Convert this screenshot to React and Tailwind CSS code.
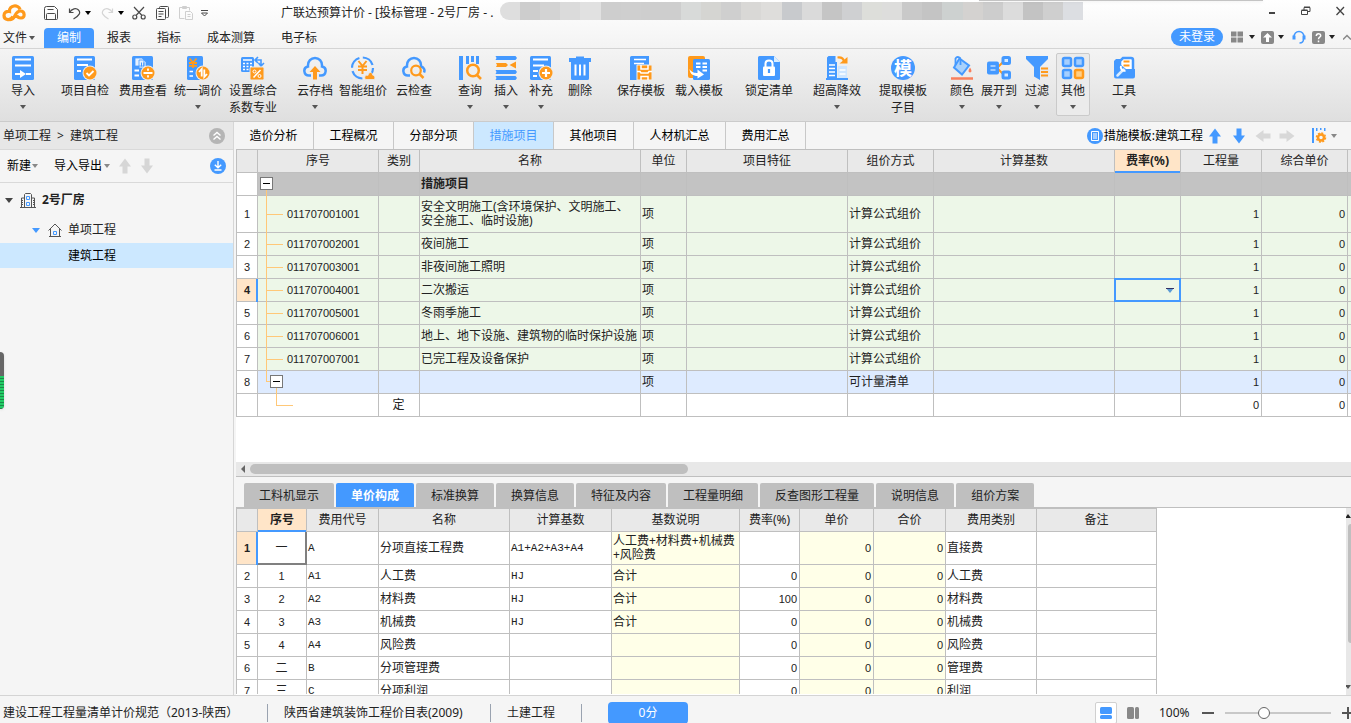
import { useState } from "react";
import clsx from "clsx";

const BLUE = "#4499ff";
const ORANGE = "#ff9a1c";

const MOSAIC = [
  "bg-[#dedede]", "bg-[#cdcdcd]", "bg-[#d3d3d3]", "bg-[#dbdbdb]", "bg-[#e1e1e1]", "bg-[#cecece]",
  "bg-[#cfcfcf]", "bg-[#cecece]", "bg-[#cecece]", "bg-[#d8dad9]", "bg-[#d5d5d2]", "bg-[#cfcfcf]",
  "bg-[#d9d8d6]", "bg-[#dedddb]", "bg-[#c8cacd]", "bg-[#dadada]", "bg-[#c5c5c5]", "bg-[#cfd0d2]",
  "bg-[#dddeda]", "bg-[#dddddc]", "bg-[#c9c9c9]", "bg-[#c4c4c4]", "bg-[#cdd1d0]", "bg-[#d4d2d0]",
  "bg-[#cdcdcd]", "bg-[#dcdcdc]", "bg-[#c3c3c3]", "bg-[#cfcfcf]", "bg-[#dcdee2]",
];

const MENUS = ["编制", "报表", "指标", "成本测算", "电子标"];

const RIBBON = [
  { label: ["导入"], icon: "import", caret: true, box: "w-[46px]" },
  { label: ["项目自检"], icon: "check", box: "ml-2.5 w-[58px]" },
  { label: ["费用查看"], icon: "fee", box: "w-[58px]" },
  { label: ["统一调价"], icon: "price", caret: true, box: "w-[52px]" },
  { label: ["设置综合", "系数专业"], icon: "ratio", box: "w-[58px]" },
  { label: ["云存档"], icon: "cloudUp", caret: true, box: "ml-2.5 w-[46px]" },
  { label: ["智能组价"], icon: "smart", box: "w-[50px]" },
  { label: ["云检查"], icon: "cloudSearch", box: "w-[52px]" },
  { label: ["查询"], icon: "query", caret: true, box: "ml-3 w-9" },
  { label: ["插入"], icon: "insert", caret: true, box: "w-9" },
  { label: ["补充"], icon: "add", caret: true, box: "w-[34px]" },
  { label: ["删除"], icon: "trash", box: "w-11" },
  { label: ["保存模板"], icon: "saveTpl", box: "ml-2.5 w-[58px]" },
  { label: ["载入模板"], icon: "loadTpl", box: "w-[58px]" },
  { label: ["锁定清单"], icon: "lock", box: "ml-3 w-[58px]" },
  { label: ["超高降效"], icon: "tower", caret: true, box: "ml-2.5 w-[58px]" },
  { label: ["提取模板", "子目"], icon: "extract", box: "ml-2 w-[58px]" },
  { label: ["颜色"], icon: "color", caret: true, box: "ml-3 w-9" },
  { label: ["展开到"], icon: "expand", caret: true, box: "w-[38px]" },
  { label: ["过滤"], icon: "filter", caret: true, box: "w-[38px]" },
  { label: ["其他"], icon: "other", caret: true, active: true, box: "w-[34px]" },
  { label: ["工具"], icon: "tools", caret: true, box: "ml-4 w-9" },
];

const PAGE_TABS = ["造价分析", "工程概况", "分部分项", "措施项目", "其他项目", "人材机汇总", "费用汇总"];

const MEASURES = [
  { code: "011707001001", name: ["安全文明施工(含环境保护、文明施工、", "安全施工、临时设施)"] },
  { code: "011707002001", name: ["夜间施工"] },
  { code: "011707003001", name: ["非夜间施工照明"] },
  { code: "011707004001", name: ["二次搬运"], current: true },
  { code: "011707005001", name: ["冬雨季施工"] },
  { code: "011707006001", name: ["地上、地下设施、建筑物的临时保护设施"] },
  { code: "011707007001", name: ["已完工程及设备保护"] },
];

const DETAIL_TABS = ["工料机显示", "单价构成", "标准换算", "换算信息", "特征及内容", "工程量明细", "反查图形工程量", "说明信息", "组价方案"];

const FEES = [
  { no: "一", code: "A", name: "分项直接工程费", base: "A1+A2+A3+A4", note: ["人工费+材料费+机械费", "+风险费"], rate: "", kind: "直接费" },
  { no: "1", code: "A1", name: "人工费", base: "HJ", note: ["合计"], rate: "0", kind: "人工费" },
  { no: "2", code: "A2", name: "材料费", base: "HJ", note: ["合计"], rate: "100", kind: "材料费" },
  { no: "3", code: "A3", name: "机械费", base: "HJ", note: ["合计"], rate: "0", kind: "机械费" },
  { no: "4", code: "A4", name: "风险费", base: "", note: [], rate: "0", kind: "风险费" },
  { no: "二", code: "B", name: "分项管理费", base: "", note: [], rate: "0", kind: "管理费" },
  { no: "三", code: "C", name: "分项利润", base: "", note: [], rate: "0", kind: "利润" },
];

export default function App() {
  return (
    <div className="relative flex h-screen flex-col overflow-hidden bg-[#f5f5f5] font-['Noto_Sans','Noto_Sans_CJK_SC',sans-serif] text-xs text-[#222]">
      <header className="bg-linear-to-b from-white to-[#f3f3f3]">
        <TitleBar />
        <MenuBar />
      </header>
      <Ribbon />
      <main className="flex min-h-0 flex-1">
        <ProjectPanel />
        <section className="flex min-w-0 flex-1 flex-col">
          <PageTabs />
          <MeasureGrid />
          <DetailPane />
        </section>
      </main>
      <StatusBar />
      {/* side meter docked on the window edge */}
      <div className="absolute left-0 top-[352px] flex h-[57px] w-1 flex-col overflow-hidden rounded-r bg-[#666] shadow">
        <div className="mt-6 flex-1 bg-[repeating-linear-gradient(#22cc66_0_2px,#1a8a48_2px_3px)]" />
      </div>
      <div className="absolute right-[88px] top-0 h-px w-[284px] bg-[#c4c4c4] shadow" />
    </div>
  );
}

function Caret({ className = "text-[#555]" }) {
  return (
    <svg viewBox="0 0 6 4" className={clsx("h-1 w-1.5 shrink-0", className)} aria-hidden="true">
      <path d="M0 0h6L3 4z" fill="currentColor" />
    </svg>
  );
}

function TitleBar() {
  return (
    <div className="flex h-[26px] items-center">
      <div className="flex w-[281px] shrink-0 items-center text-[#4a4a4a]">
        <svg viewBox="0 0 24 18" className="ml-0.5 h-[18px] w-6" fill="none" aria-label="广联达">
          <path d="M11 12.500C9 17 2 16.500 2 11.500 2 8.500 4.500 7 7.500 7.500 7 1 16.500 0 18 5.500" stroke={ORANGE} strokeWidth="3.200" />
          <path d="M7.500 15.500c3.500.500 4.500-2 5.500-4s2.500-4.500 5.500-4.500c4.500 0 5 7 .500 7-2.500 0-4-1-3.500-3" stroke={ORANGE} strokeWidth="3.200" />
        </svg>
        <button aria-label="保存" className="ml-[18px]">
          <svg viewBox="0 0 14 14" className="size-3.5" fill="none" stroke="currentColor">
            <path d="M2.500.5h8l3 3v9a1 1 0 0 1-1 1h-11a1 1 0 0 1-1-1v-10a2 2 0 0 1 2-2zM3.500 3.500h6M2.500 13V8.500a1 1 0 0 1 1-1h7a1 1 0 0 1 1 1V13" />
          </svg>
        </button>
        <button aria-label="撤销" className="ml-2.5">
          <svg viewBox="0 0 13 13" className="size-[13px]" fill="none" stroke="currentColor" strokeWidth="1.200">
            <path d="M1.500 1.500v4h4M1.500 5.500C4 1.500 8 .500 10.500 3s1 5.500-5 9" />
          </svg>
        </button>
        <button aria-label="撤销列表" className="ml-1"><Caret className="text-black" /></button>
        <button aria-label="恢复" className="ml-2.5 text-[#d5d5d5]">
          <svg viewBox="0 0 13 13" className="size-[13px]" fill="none" stroke="currentColor" strokeWidth="1.200">
            <path d="M11.500 1.500v4h-4M11.500 5.500C9 1.500 5 .500 2.500 3s-1 5.500 5 9" />
          </svg>
        </button>
        <button aria-label="恢复列表" className="ml-1"><Caret className="text-black" /></button>
        <button aria-label="剪切" className="ml-2">
          <svg viewBox="0 0 14 14" className="size-3.5" fill="none" stroke="currentColor" strokeWidth="1.200">
            <path d="M2 1l8 8.500M12 1L4 9.500" />
            <circle cx="2.800" cy="11" r="2" /><circle cx="11.200" cy="11" r="2" />
          </svg>
        </button>
        <button aria-label="复制" className="ml-2.5">
          <svg viewBox="0 0 13 14" className="h-3.5 w-[13px]" fill="none" stroke="currentColor">
            <path d="M3.500 2.500v-1a1 1 0 0 1 1-1h7a1 1 0 0 1 1 1v9a1 1 0 0 1-1 1h-1" />
            <rect x=".5" y="2.500" width="9" height="11" rx="1" />
            <path d="M2.500 5.500h5M2.500 8h5M2.500 10.500h3" />
          </svg>
        </button>
        <button aria-label="粘贴" className="ml-2.5 text-[#cfcfcf]">
          <svg viewBox="0 0 14 14" className="size-3.5" fill="none" stroke="currentColor">
            <path d="M5.500 12.500h-5v-11h10v3M3.500.500h4v2h-4zM6.500 5.500h5l2 2v6h-7zM8.500 8.500h3M8.500 10.500h3" />
          </svg>
        </button>
        <button aria-label="自定义" className="ml-2">
          <svg viewBox="0 0 7 7" className="size-[7px]" fill="none" stroke="currentColor">
            <path d="M0 .500h7M.500 3h6L3.500 6z" />
          </svg>
        </button>
      </div>
      <h1 className="w-[219px] shrink-0 whitespace-nowrap">广联达预算计价 - [投标管理 - 2号厂房 - .</h1>
      <div className="mb-1 flex h-[18px] w-[583px] overflow-hidden rounded-l-full rounded-r-lg">
        {MOSAIC.map((tone, i) => <div key={i} className={clsx("flex-1", tone)} />)}
      </div>
      <div className="mb-1 ml-auto flex shrink-0 items-center gap-6 pr-1.5 text-[#444]">
        <button aria-label="最小化"><svg viewBox="0 0 10 10" className="size-2.5"><path d="M2 6h6v2H2z" fill="currentColor" /></svg></button>
        <button aria-label="还原">
          <svg viewBox="0 0 10 10" className="size-2.5" fill="none" stroke="currentColor"><path d="M.5 4.500h6v4h-6zM.5 4h6M3 4V1.500h6v4H7M3 1h6" /></svg>
        </button>
        <button aria-label="关闭">
          <svg viewBox="0 0 10 10" className="size-2.5" stroke="currentColor" strokeWidth="1.300"><path d="M1.500 1l7.500 8M9 1L1.500 9" /></svg>
        </button>
      </div>
    </div>
  );
}

function MenuBar() {
  const [active, setActive] = useState("编制");
  return (
    <nav className="flex h-[23px] items-end border-b border-[#d4d4d4]">
      <button className="flex h-5 w-11 items-center gap-0.5 pl-[3px]">文件<Caret /></button>
      {MENUS.map((menu) => (
        <button
          key={menu}
          onClick={() => setActive(menu)}
          className={clsx("h-5 rounded-t px-[13px]", menu === active && "bg-[#4499ff] text-white")}
        >
          {menu}
        </button>
      ))}
      <div className="mb-px ml-auto flex h-5 items-center gap-1.5 text-[#888]">
        <button className="h-[18px] w-[52px] rounded-full bg-[#4499ff] leading-[18px] text-white">未登录</button>
        <button aria-label="布局" className="ml-0.5 flex items-center gap-1.5">
          <svg viewBox="0 0 12 12" className="size-3" fill="currentColor"><path d="M0 .5h5.500v5H0zM6.500.5H12v5H6.500zM0 6.500h5.500v5H0zM6.500 6.500H12v5H6.500z" /></svg>
          <Caret className="text-[#222]" />
        </button>
        <button aria-label="升级" className="flex items-center gap-1">
          <svg viewBox="0 0 13 13" className="size-[13px]"><rect width="13" height="13" rx="2" fill="currentColor" /><path d="M6.500 2L11 6.500H8V11H5V6.500H2z" fill="#fff" /></svg>
          <Caret className="text-[#222]" />
        </button>
        <button aria-label="客服" className="ml-0.5">
          <svg viewBox="0 0 14 14" className="size-3.5" fill="none" stroke={BLUE}>
            <path d="M2 7.500C1.500-.500 12.500-.500 12 7.500M11.500 9c0 2.500-1.500 4-4 4" strokeWidth="1.500" />
            <path d="M2 5.500v4M12 5.500v4" strokeWidth="3" />
          </svg>
        </button>
        <button aria-label="帮助" className="flex items-center gap-1">
          <svg viewBox="0 0 13 13" className="size-[13px]"><rect width="13" height="13" rx="2" fill="currentColor" /><path d="M4.300 5c0-3 4.400-3 4.400-.300C8.700 6 6.500 6.200 6.500 8.300M6.500 9.500v1.800" fill="none" stroke="#fff" strokeWidth="1.500" /></svg>
          <Caret className="text-[#222]" />
        </button>
        <button aria-label="收起功能区" className="ml-0.5">
          <svg viewBox="0 0 8 8" className="size-2" fill="none" stroke="currentColor" strokeWidth="1.500"><path d="M0 6.500l4-4 4 4" /></svg>
        </button>
      </div>
    </nav>
  );
}

function Ribbon() {
  return (
    <div className="flex h-[73px] shrink-0 border-b border-[#cbcbcb] bg-linear-to-b from-[#f4f4f4] to-[#dfdfdf]">
      {RIBBON.map(({ label, icon, caret, active, box }) => (
        <button key={icon} className={clsx("relative flex shrink-0 flex-col items-center pt-[7px]", box)}>
          {active && <span className="absolute inset-x-0 top-1 h-[63px] rounded-xs border border-[#cacaca] bg-[#ebebeb]" />}
          <span className="relative flex size-6 items-center justify-center"><RibbonIcon name={icon} /></span>
          <span className="relative mt-0.5 whitespace-nowrap leading-[17px]">
            {label.map((line) => <span key={line} className="block">{line}</span>)}
          </span>
          {caret && <span className="relative pt-1.5"><Caret /></span>}
        </button>
      ))}
    </div>
  );
}

function Badge({ children }) {
  return (
    <>
      <circle cx="17" cy="17" r="7.500" fill="#ededed" />
      <circle cx="17" cy="17" r="6.500" fill={ORANGE} />
      <g fill="none" stroke="#fff" strokeWidth="1.800">{children}</g>
    </>
  );
}

const RIBBON_ICONS = {
  import: (
    <>
      <rect x="1" width="22" height="24" rx="1.500" fill={BLUE} />
      <path d="M4 3.500h16M4 9.500h16M4 18h6M15 18h5" stroke="#fff" strokeWidth="2" />
      <path d="M9 14l6 4-6 4z" fill="#fff" />
    </>
  ),
  check: (
    <>
      <rect x="1" width="21" height="24" rx="1.500" fill={BLUE} />
      <path d="M4 3.500h15M4 9h11M4 15h4" stroke="#fff" strokeWidth="1.800" />
      <Badge><path d="M13.500 17l2.500 2.500 4.500-4.500" /></Badge>
    </>
  ),
  fee: (
    <>
      <rect x="1" width="21" height="24" rx="1.500" fill={BLUE} />
      <path d="M4 2h7l2 2v6H4zM8 4h5l2 2v6H8z" fill="#e5f1ff" stroke={BLUE} strokeWidth=".800" />
      <path d="M3.500 14.500H8M3.500 19.500H8" stroke="#fff" strokeWidth="1.800" />
      <path d="M10.500 6.500v4M12.800 6.500v4" stroke={BLUE} />
      <Badge><path d="M12.500 17h9M17 12.500v2.200M17 19.300v2.200" /></Badge>
    </>
  ),
  price: (
    <>
      <rect x="1" width="16" height="24" rx="1.500" fill={BLUE} />
      <path d="M3.500 2.500l3.500 4 3.500-4M7 6.500V12M3 7h8M3 9.800h8" fill="none" stroke={ORANGE} strokeWidth="1.800" />
      <path d="M3.500 15.500H7M3.500 20H7" stroke="#fff" strokeWidth="1.600" />
      <Badge><path d="M15.700 20.500v-7.500l-2.700 3M18.300 13.500V21l2.700-3" /></Badge>
    </>
  ),
  ratio: (
    <>
      <rect x="0" y="1" width="13" height="15" rx="1.500" fill={BLUE} />
      <path d="M2 4h9" stroke="#fff" strokeWidth="1.500" />
      <path d="M2 7.500h9M2 10.500h9M2 13.500h9" stroke="#fff" strokeWidth="1.500" strokeDasharray="2 1.500" />
      <path d="M14 4h6v5M17 1l-3 3 3 3M17.500 7l2.500 3 3-3" fill="none" stroke={BLUE} strokeWidth="1.600" />
      <rect x="9" y="11" width="14" height="13" rx="1.500" fill={ORANGE} stroke="#e9e9e9" />
      <path d="M19.500 14l-7 7.500" stroke="#fff" strokeWidth="1.500" />
      <circle cx="13.500" cy="15.500" r="1.500" fill="none" stroke="#fff" /><circle cx="18.500" cy="20" r="1.500" fill="none" stroke="#fff" />
    </>
  ),
  cloudUp: (
    <>
      <path d="M8 19.500H6C.500 19.500-.500 11.500 5 10.500 4-1 20-1 19 10.500c5.500 1 4.500 9-1 9h-2" fill="none" stroke={BLUE} strokeWidth="2.500" />
      <path d="M12 10l5.500 6H14v7.500h-4V16H6.500z" fill={ORANGE} />
    </>
  ),
  smart: (
    <>
      <circle cx="11.500" cy="12" r="10.500" fill="none" stroke={BLUE} strokeWidth="2.200" strokeDasharray="13 3.500" />
      <path d="M7.500 5l4 5 4-5M11.500 10v8M7 10.500h9M7 14h9" fill="none" stroke={ORANGE} strokeWidth="2" />
      <path d="M14.500 23.500c-2-3 .500-5 2.500-4 .500-4 4.500-4 4.500-.500 2.500.500 3 3.500 1.500 4.500z" fill={ORANGE} stroke="#eaeaea" strokeWidth=".800" />
    </>
  ),
  cloudSearch: (
    <>
      <path d="M8 19.500H6C.500 19.500-.500 11.500 5 10.500 4-1 20-1 19 10.500c3.500 1 4 4 3 6" fill="none" stroke={BLUE} strokeWidth="2.500" />
      <circle cx="14" cy="14.500" r="4.800" fill="none" stroke={ORANGE} strokeWidth="2.200" />
      <path d="M17.500 18l4 4" stroke={ORANGE} strokeWidth="2.500" />
    </>
  ),
  query: (
    <>
      <path d="M3 0v24" stroke={BLUE} strokeWidth="4" />
      <path d="M9.500 0v8M14.500 0v6M19.500 0v8" stroke={BLUE} strokeWidth="3" />
      <circle cx="15" cy="14.500" r="5.800" fill="#eee" stroke={ORANGE} strokeWidth="2.500" />
      <path d="M19 19l4 4" stroke={ORANGE} strokeWidth="2.500" />
    </>
  ),
  insert: (
    <>
      <path d="M1.500 0h20L23 2l-1.500 2h-20L2.500 2zM1.500 14h20l1.500 2-1.500 2h-20l1-2zM1.500 20h20l1.500 2-1.500 2h-20l1-2z" fill={BLUE} />
      <path d="M2 7h10l2 2-2 2H2l1-2zM22 5.500v7L15.500 9z" fill={ORANGE} />
    </>
  ),
  add: (
    <>
      <rect x="1" width="21" height="24" rx="1.500" fill={BLUE} />
      <path d="M4 3.500h15M4 9.500h11M4 15h5M4 20h4" stroke="#fff" strokeWidth="1.800" />
      <Badge><path d="M13 17h8M17 13v8" strokeWidth="2.200" /></Badge>
    </>
  ),
  trash: (
    <>
      <path d="M1 2h7V.500h8V2h7v4H1zM3 5h18v17.500a1.500 1.500 0 0 1-1.500 1.500h-15A1.500 1.500 0 0 1 3 22.500z" fill={BLUE} />
      <path d="M7.500 8.500v11M12 8.500v11M16.500 8.500v11" stroke="#fff" strokeWidth="2" />
    </>
  ),
  saveTpl: (
    <>
      <path d="M1 1.500A1.500 1.500 0 0 1 2.500 0H20v9H9v15H1z" fill={BLUE} />
      <path d="M5 3.500h12M5 7.500h10" stroke="#fff" strokeWidth="1.600" />
      <path d="M8 9h15v15H8z" fill={ORANGE} stroke="#eee" />
      <path d="M12 9v4h7V9M8 15.500h3l1 1.500h7l1-1.500h3M12 24v-3.500h7V24" fill="none" stroke="#fff" strokeWidth="1.500" />
    </>
  ),
  loadTpl: (
    <>
      <rect x="1" width="17" height="22" rx="2" fill={ORANGE} />
      <rect x="6" y="3" width="17" height="21" rx="1.500" fill={BLUE} />
      <path d="M9 7.500h4.500M15.500 7.500H20M9 11h4.500M15.500 11H20M15.500 14.500H20" stroke="#fff" strokeWidth="1.800" />
      <path d="M2.500 13c2 3.500 5 4 8 4v-3.500l6.500 5-6.500 4V20C6 20 3 18 2.500 13z" fill="#fff" />
    </>
  ),
  lock: (
    <>
      <path d="M2.500 0H17l6 6v16.500a1.500 1.500 0 0 1-1.500 1.500h-19A1.500 1.500 0 0 1 1 22.500v-21A1.500 1.500 0 0 1 2.500 0z" fill={BLUE} />
      <path d="M17 0l6 6h-6z" fill="#dbeeff" />
      <path d="M8.500 11V7.500c0-4 7-4 7 0V11" fill="none" stroke="#fff" strokeWidth="2" />
      <rect x="6" y="10.500" width="12" height="9.500" rx="1" fill="#fff" />
      <path d="M12 13v4" stroke={BLUE} strokeWidth="2.200" />
    </>
  ),
  tower: (
    <>
      <path d="M3.500 0h7v6H12v16h11v2H1v-2h1V1.500z" fill={BLUE} />
      <rect x="13" y="10" width="9" height="12" fill="#cfe6ff" />
      <path d="M4 9h6M4 12.500h6M4 16h6M4 19.500h6M14.500 14h6M14.500 18h6" stroke="#fff" strokeWidth="1.700" />
      <path d="M12.500 1.500c4-.500 6 1.500 6.500 4" fill="none" stroke={ORANGE} strokeWidth="2.200" />
      <path d="M14.500 7.500h8V1z" fill={ORANGE} />
    </>
  ),
  color: (
    <>
      <path d="M9.500 2.500l9.500 7-7 9-8-7z" fill="#a9d1fb" stroke={BLUE} strokeWidth="2" />
      <path d="M5.500 9V2.500c1.500-2.500 5-1.500 5 1V9" fill="none" stroke={BLUE} strokeWidth="1.800" />
      <path d="M20 11.500c2 3 2 4.500 0 5-2-.500-2-2 0-5z" fill="#f9805c" />
      <path d="M1 22.500h22" stroke="#f9805c" strokeWidth="2.500" />
    </>
  ),
  expand: (
    <>
      <path d="M10 12l7-7M10 12l7 7" stroke={ORANGE} strokeWidth="2" />
      <rect x="0" y="5.500" width="12" height="13" rx="2" fill={BLUE} />
      <path d="M3.500 10h5M3.500 14h5" stroke="#bddcff" strokeWidth="1.500" />
      <rect x="16" y="1.500" width="6.500" height="6" rx="1" fill="#d8ebff" stroke={BLUE} strokeWidth="3" />
      <rect x="16" y="16" width="6.500" height="6" rx="1" fill="#d8ebff" stroke={BLUE} strokeWidth="3" />
    </>
  ),
  filter: (
    <>
      <path d="M1 0h22v3l-8 8v13l-6-3.500V11L1 3z" fill={BLUE} />
      <rect x="15" y="11" width="9" height="11" fill="#e9e9e9" />
      <path d="M16 12.500h7M16 16h7M16 19.500h7" stroke={ORANGE} strokeWidth="1.800" />
    </>
  ),
  other: (
    <>
      <g fill="#a5cfff" stroke={BLUE} strokeWidth="2.500">
        <rect x="2" y="2" width="8" height="8" rx="1.500" />
        <rect x="14" y="2" width="8" height="8" rx="1.500" />
        <rect x="2" y="14" width="8" height="8" rx="1.500" />
      </g>
      <rect x="14" y="14" width="8" height="8" rx="1.500" fill="#ffcf87" stroke={ORANGE} strokeWidth="2.500" />
    </>
  ),
  tools: (
    <>
      <path d="M8 14V5l3-3h8a2 2 0 0 1 2 2v10" fill="#fff" stroke={BLUE} strokeWidth="2.500" />
      <path d="M11.500 5.500h6M11.500 9.500h6" stroke={ORANGE} strokeWidth="1.800" />
      <path d="M4 3h5v6l5 4h9v7.500a2 2 0 0 1-2 2H4a2 2 0 0 1-2-2V5z" fill={BLUE} />
      <path d="M5.500 19.500l6-6" stroke="#d9ecff" strokeWidth="2.500" strokeLinecap="round" />
      <path d="M9 10c-1 3 1.500 5.500 4.500 4.500" fill="none" stroke="#fff" strokeWidth="2" />
    </>
  ),
};

function RibbonIcon({ name }) {
  if (name === "extract") {
    return <span className="flex size-6 items-center justify-center rounded-full bg-[#4499ff] text-lg font-bold leading-6 text-white">模</span>;
  }
  return <svg viewBox="0 0 24 24" className="size-6" aria-hidden="true">{RIBBON_ICONS[name]}</svg>;
}

function Arrow({ className }) {
  return (
    <svg viewBox="0 0 14 16" className={clsx("h-4 w-3.5", className)} aria-hidden="true">
      <path d="M7 .500L13 8.500H9.500V15.500h-5V8.500H1z" fill="currentColor" />
    </svg>
  );
}

function ProjectPanel() {
  return (
    <aside className="w-[234px] shrink-0 border-r border-[#d6d6d6]">
      <div className="flex h-7 items-center justify-between border-b border-[#d9d9d9] bg-[#e7e7e7] px-[3px] pr-2">
        <span className="flex gap-1.5"><span>单项工程</span><span>&gt;</span><span>建筑工程</span></span>
        <button aria-label="收起">
          <svg viewBox="0 0 16 16" className="size-4" fill="none" stroke="#fff" strokeWidth="1.400">
            <circle cx="8" cy="8" r="8" fill="#b5b5b5" stroke="none" /><path d="M4.500 7.500L8 4.500l3.500 3M4.500 11.500L8 8.500l3.500 3" />
          </svg>
        </button>
      </div>
      <div className="flex h-[33px] items-center border-b border-[#d9d9d9] px-[7px]">
        <button className="flex items-center text-black">新建<Caret className="ml-px text-[#888]" /></button>
        <button className="ml-4 flex items-center text-black">导入导出<Caret className="ml-0.5 text-[#888]" /></button>
        <button aria-label="上移" className="ml-2 text-[#d6d6d6]"><Arrow /></button>
        <button aria-label="下移" className="ml-2 text-[#d6d6d6]"><Arrow className="rotate-180" /></button>
        <button aria-label="下载" className="ml-auto">
          <svg viewBox="0 0 16 16" className="size-4" fill="none" stroke="#fff" strokeWidth="1.400">
            <circle cx="8" cy="8" r="8" fill={BLUE} stroke="none" /><path d="M8 3v6.500M4.800 6.800L8 9.800l3.200-3M4.500 12h7" />
          </svg>
        </button>
      </div>
      <ul>
        <li className="flex h-[34px] items-center pl-[5px] font-bold">
          <svg viewBox="0 0 8 5" className="h-[5px] w-2"><path d="M0 0h8L4 5z" fill="#444" /></svg>
          <svg viewBox="0 0 16 16" className="ml-[7px] size-4" fill="none" stroke="#555">
            <path d="M4.500 15V2.500l1-1h5l1 1V15M4.500 6h-3v9M11.500 6h3v9M0 15.500h16M2 8.500h1M2 10.500h1M2 12.500h1M13 8.500h1M13 10.500h1M13 12.500h1" />
            <path d="M6.500 4.500h3v3h-3zM6.500 10.500h3v3h-3z" stroke={BLUE} />
          </svg>
          <span className="ml-1.5">2号厂房</span>
        </li>
        <li className="flex h-[26px] items-center pl-8">
          <svg viewBox="0 0 8 5" className="h-[5px] w-2"><path d="M0 0h8L4 5z" fill={BLUE} /></svg>
          <svg viewBox="0 0 14 14" className="ml-2 size-3.5" fill="none" stroke="#555">
            <path d="M.5 7.500L7 1l6.500 6.500M2.500 6v7.500h9V6M1 13.500h12" /><path d="M5.500 8.500h3v3h-3z" stroke={BLUE} />
          </svg>
          <span className="ml-1.5">单项工程</span>
        </li>
        <li className="flex h-[25px] items-center bg-[#cce8ff] pl-[68px] text-black">建筑工程</li>
      </ul>
    </aside>
  );
}

function PageTabs() {
  const [active, setActive] = useState("措施项目");
  return (
    <div className="flex h-[27px] shrink-0 items-stretch">
      {PAGE_TABS.map((tab) => (
        <button
          key={tab}
          onClick={() => setActive(tab)}
          className={clsx("border-r border-[#c8c8c8]", tab.length > 4 ? "w-[92px]" : "w-20", tab === active ? "bg-[#cce8ff] text-[#4499ff]" : "text-black")}
        >
          {tab}
        </button>
      ))}
      <div className="ml-auto flex items-center pr-3.5 text-black">
        <svg viewBox="0 0 16 16" className="size-4" fill="none" stroke="#fff">
          <circle cx="8" cy="8" r="8" fill={BLUE} stroke="none" /><path d="M4.500 3.500h7v9h-7zM6 6h4M6 8h4M6 10h4" />
        </svg>
        <span className="ml-px">措施模板:建筑工程</span>
        <button aria-label="上移" className="flex w-6 justify-center text-[#4499ff]"><Arrow /></button>
        <button aria-label="下移" className="flex w-6 justify-center text-[#4499ff]"><Arrow className="rotate-180" /></button>
        <button aria-label="升级" className="flex w-6 justify-center text-[#d8d8d8]"><Arrow className="-rotate-90" /></button>
        <button aria-label="降级" className="flex w-6 justify-center text-[#d8d8d8]"><Arrow className="rotate-90" /></button>
        <button aria-label="列设置" className="ml-3 flex items-center gap-1">
          <svg viewBox="0 0 16 16" className="size-4" aria-hidden="true">
            <path d="M1 0h2v15H1zM5 0h1.500v3H5zM9 0h1.500v2H9zM13 0h1.500v3H13z" fill={BLUE} />
            <circle cx="10" cy="9.500" r="3" fill="none" stroke={ORANGE} strokeWidth="2.500" />
            <circle cx="10" cy="9.500" r="4.500" fill="none" stroke={ORANGE} strokeWidth="1.500" strokeDasharray="2 1.500" />
          </svg>
          <Caret className="text-[#888]" />
        </button>
      </div>
    </div>
  );
}

const GRID = "w-0 table-fixed border-separate border-spacing-0 bg-white leading-[14px] [&_td]:border-b [&_td]:border-r [&_td]:border-[#bfbfbf] [&_td]:py-0 [&_td]:pl-px [&_td]:pr-0.5 [&_th]:border-b [&_th]:border-r [&_th]:border-t [&_th]:border-[#bfbfbf] [&_th]:p-0 [&_th:first-child]:border-l [&_td:first-child]:border-l [&_td:first-child]:px-0 [&_td:first-child]:text-center";
const DIGITS = "font-['Liberation_Sans','Noto_Sans_CJK_SC',sans-serif] text-[11px]";
const NUM = "text-right font-['Liberation_Sans','Noto_Sans_CJK_SC',sans-serif] text-[11px]";
const CODE = "font-['Liberation_Mono','Noto_Sans_CJK_SC',monospace] text-[11px]";

function HeadCell({ children, current }) {
  return (
    <th className={clsx("relative", current ? "bg-[#ffe5c8] font-bold" : "bg-[#e9e9e9] font-normal")}>
      {children}
      {current && <span className="absolute inset-x-0 -bottom-px h-0.5 bg-[#4499ff]" />}
    </th>
  );
}

function IndexCell({ children, current }) {
  return (
    <td className={clsx("relative", current ? "bg-[#ffe5c8] font-bold" : "bg-white")}>
      <span className={DIGITS}>{children}</span>
      {current && <span className="absolute -right-px top-0 -bottom-px z-10 w-0.5 bg-[#4499ff]" />}
    </td>
  );
}

function Toggle({ className, label }) {
  return (
    <button aria-label={label} className={clsx("absolute z-10 flex size-[13px] items-center justify-center border border-[#777] bg-white", className)}>
      <span className="h-px w-[7px] bg-black" />
    </button>
  );
}

function MeasureGrid() {
  const heads = ["", "序号", "类别", "名称", "单位", "项目特征", "组价方式", "计算基数", "费率(%)", "工程量", "综合单价", ""];
  return (
    <div className="ml-0.5 flex h-[328px] shrink-0 flex-col overflow-hidden border-b border-[#bfbfbf] bg-white">
      <div className="min-h-0 flex-1 overflow-hidden">
        <table className={GRID}>
          <colgroup>
            <col className="w-[22px]" /><col className="w-[121px]" /><col className="w-[41px]" /><col className="w-[221px]" />
            <col className="w-[46px]" /><col className="w-[161px]" /><col className="w-[86px]" /><col className="w-[181px]" />
            <col className="w-[66px]" /><col className="w-[81px]" /><col className="w-[86px]" /><col className="w-[80px]" />
          </colgroup>
          <thead>
            <tr className="h-6">
              {heads.map((head, i) => <HeadCell key={i} current={head === "费率(%)"}>{head}</HeadCell>)}
            </tr>
          </thead>
          <tbody>
            <tr className="h-[23px] bg-[#c3c3c3] font-bold">
              <IndexCell />
              <td className="relative">
                <Toggle label="折叠措施项目" className="left-0.5 top-1" />
                <span className="absolute -bottom-px left-2 h-1.5 w-px bg-[#ffc878]" />
              </td>
              <td />
              <td>措施项目</td>
              <td /><td /><td /><td /><td /><td /><td /><td />
            </tr>
            {MEASURES.map((row, i) => (
              <tr key={row.code} className={clsx("bg-[#edf7e8]", row.name.length > 1 ? "h-[37px]" : "h-[23px]")}>
                <IndexCell current={row.current}>{i + 1}</IndexCell>
                <td className="relative">
                  <span className="absolute -bottom-px left-2 top-0 z-10 w-px bg-[#ffc878]" />
                  <span className="absolute left-2 top-1/2 h-px w-[17px] bg-[#ffc878]" />
                  <span className={clsx("pl-7", DIGITS)}>{row.code}</span>
                </td>
                <td />
                <td className="whitespace-nowrap">{row.name.map((line) => <div key={line}>{line}</div>)}</td>
                <td>项</td>
                <td />
                <td>计算公式组价</td>
                <td />
                <td className="relative">
                  {row.current && (
                    <>
                      <select aria-label="费率" className="absolute -inset-px z-10 appearance-none border-2 border-[#4499ff]"><option> </option></select>
                      <svg viewBox="0 0 8 5" className="pointer-events-none absolute right-1.5 top-[9px] z-10 h-[5px] w-2">
                        <path d="M0 0h8L4 5z" fill="#5b9bd5" /><path d="M0 .500h8" stroke="#336" />
                      </svg>
                    </>
                  )}
                </td>
                <td className={NUM}>1</td>
                <td className={NUM}>0</td>
                <td />
              </tr>
            ))}
            <tr className="h-[23px] bg-[#deebff]">
              <IndexCell>8</IndexCell>
              <td className="relative">
                <span className="absolute left-2 top-0 h-[11px] w-1 border-b border-l border-[#ffc878]" />
                <Toggle label="折叠可计量清单" className="left-3 top-1" />
                <span className="absolute -bottom-px left-[18px] h-1.5 w-px bg-[#ffc878]" />
              </td>
              <td /><td />
              <td>项</td>
              <td />
              <td>可计量清单</td>
              <td /><td />
              <td className={NUM}>1</td>
              <td className={NUM}>0</td>
              <td />
            </tr>
            <tr className="h-[23px]">
              <IndexCell />
              <td className="relative"><span className="absolute left-[18px] top-0 h-3 w-[17px] border-b border-l border-[#ffc878]" /></td>
              <td className="text-center">定</td>
              <td /><td /><td /><td /><td /><td />
              <td className={NUM}>0</td>
              <td className={NUM}>0</td>
              <td />
            </tr>
          </tbody>
        </table>
      </div>
      <div className="flex h-3.5 shrink-0 items-center bg-[#e8e8e8] pl-[5px]">
        <svg viewBox="0 0 4 8" className="h-2 w-1"><path d="M4 0v8L0 4z" fill="#666" /></svg>
        <div className="ml-[5px] h-2.5 w-[39.5%] rounded-full bg-[#bfbfbf]" />
      </div>
    </div>
  );
}

function DetailPane() {
  const [active, setActive] = useState("单价构成");
  const heads = ["", "序号", "费用代号", "名称", "计算基数", "基数说明", "费率(%)", "单价", "合价", "费用类别", "备注"];
  return (
    <div className="ml-0.5 flex min-h-0 flex-1 flex-col pt-1.5">
      <div className="flex shrink-0 gap-0.5 border-b border-[#bfbfbf] pl-2">
        {DETAIL_TABS.map((tab) => (
          <button
            key={tab}
            onClick={() => setActive(tab)}
            className={clsx("h-6 rounded-t-xs px-[15px] pt-px", tab === active ? "bg-[#4499ff] font-bold text-white" : "bg-[#bfbfbf]")}
          >
            {tab}
          </button>
        ))}
      </div>
      <div className="flex min-h-0 flex-1 bg-white">
        <div className="mb-px min-w-0 flex-1 overflow-hidden">
          <table className={GRID}>
            <colgroup>
              <col className="w-[22px]" /><col className="w-[49px]" /><col className="w-[72px]" /><col className="w-[131px]" />
              <col className="w-[102px]" /><col className="w-[128px]" /><col className="w-[60px]" /><col className="w-[74px]" />
              <col className="w-[72px]" /><col className="w-[91px]" /><col className="w-[120px]" />
            </colgroup>
            <thead>
              <tr className="h-6">
                {heads.map((head, i) => <HeadCell key={i} current={head === "序号"}>{head}</HeadCell>)}
              </tr>
            </thead>
            <tbody>
              {FEES.map((fee, i) => (
                <tr key={fee.code} className={i === 0 ? "h-[33px]" : "h-[23px]"}>
                  <IndexCell current={i === 0}>{i + 1}</IndexCell>
                  <td className="relative text-center">
                    <span className={/\d/.test(fee.no) ? DIGITS : undefined}>{fee.no}</span>
                    {i === 0 && <span className="absolute -bottom-px -right-px left-0 top-0 border-b-2 border-r-2 border-[#808080]" />}
                  </td>
                  <td className={CODE}>{fee.code}</td>
                  <td>{fee.name}</td>
                  <td className={CODE}>{fee.base}</td>
                  <td className="whitespace-nowrap bg-[#ffffe8]">{fee.note.map((line) => <div key={line}>{line}</div>)}</td>
                  <td className={NUM}>{fee.rate}</td>
                  <td className={clsx(NUM, "bg-[#ffffe8]")}>0</td>
                  <td className={clsx(NUM, "bg-[#ffffe8]")}>0</td>
                  <td>{fee.kind}</td>
                  <td />
                </tr>
              ))}
            </tbody>
          </table>
        </div>
        <div className="flex w-[5px] shrink-0 flex-col items-end justify-between overflow-hidden bg-[#e8e8e8] py-1.5">
          <Caret className="rotate-180" />
          <div className="mb-auto mt-1.5 h-[119px] w-[3px] rounded-l bg-[#bfbfbf]" />
          <Caret />
        </div>
      </div>
    </div>
  );
}

function StatusBar() {
  const [zoom, setZoom] = useState(35);
  return (
    <footer className="flex h-7 shrink-0 items-center border-t border-[#d4d4d4] pt-1.5">
      <span className="w-[267px] pl-[3px]">建设工程工程量清单计价规范（2013-陕西）</span>
      <span className="h-[18px] w-px bg-[#9aa3b0]" />
      <span className="w-[222px] pl-4">陕西省建筑装饰工程价目表(2009)</span>
      <span className="h-[18px] w-px bg-[#9aa3b0]" />
      <span className="w-[90px] pl-4">土建工程</span>
      <span className="h-[18px] w-px bg-[#9aa3b0]" />
      <button className="ml-[26px] h-[22px] w-20 rounded-sm bg-[#4499ff] text-white">0分</button>
      <div className="ml-auto flex items-center text-[#555]">
        <button aria-label="上下布局" className="flex size-[22px] items-center justify-center rounded-xs border border-[#d0d0d0] bg-white">
          <svg viewBox="0 0 12 12" className="size-3" fill={BLUE}><rect width="12" height="7" rx="1.500" /><rect y="8" width="12" height="4" rx="1.500" /></svg>
        </button>
        <button aria-label="左右布局" className="ml-2.5">
          <svg viewBox="0 0 12 12" className="size-3" fill="#888"><rect width="7" height="12" rx="1.500" /><rect x="8" width="4" height="12" rx="1.500" /></svg>
        </button>
        <span className="ml-5 w-8 text-[#222]">100%</span>
        <button aria-label="缩小" className="ml-[11px]"><svg viewBox="0 0 12 12" className="size-3"><path d="M0 5h12v2H0z" fill="currentColor" /></svg></button>
        <input
          type="range"
          aria-label="缩放"
          value={zoom}
          onChange={(event) => setZoom(Number(event.target.value))}
          className="ml-[11px] h-0.5 w-[106px] appearance-none bg-[#c8c8c8] [&::-webkit-slider-thumb]:size-3 [&::-webkit-slider-thumb]:appearance-none [&::-webkit-slider-thumb]:rounded-full [&::-webkit-slider-thumb]:border [&::-webkit-slider-thumb]:border-[#666] [&::-webkit-slider-thumb]:bg-white"
        />
        <button aria-label="放大" className="ml-[11px] w-[9px] overflow-hidden"><svg viewBox="0 0 12 12" className="h-3 w-3 max-w-none"><path d="M0 5h12v2H0zM5 0h2v12H5z" fill="currentColor" /></svg></button>
      </div>
    </footer>
  );
}
